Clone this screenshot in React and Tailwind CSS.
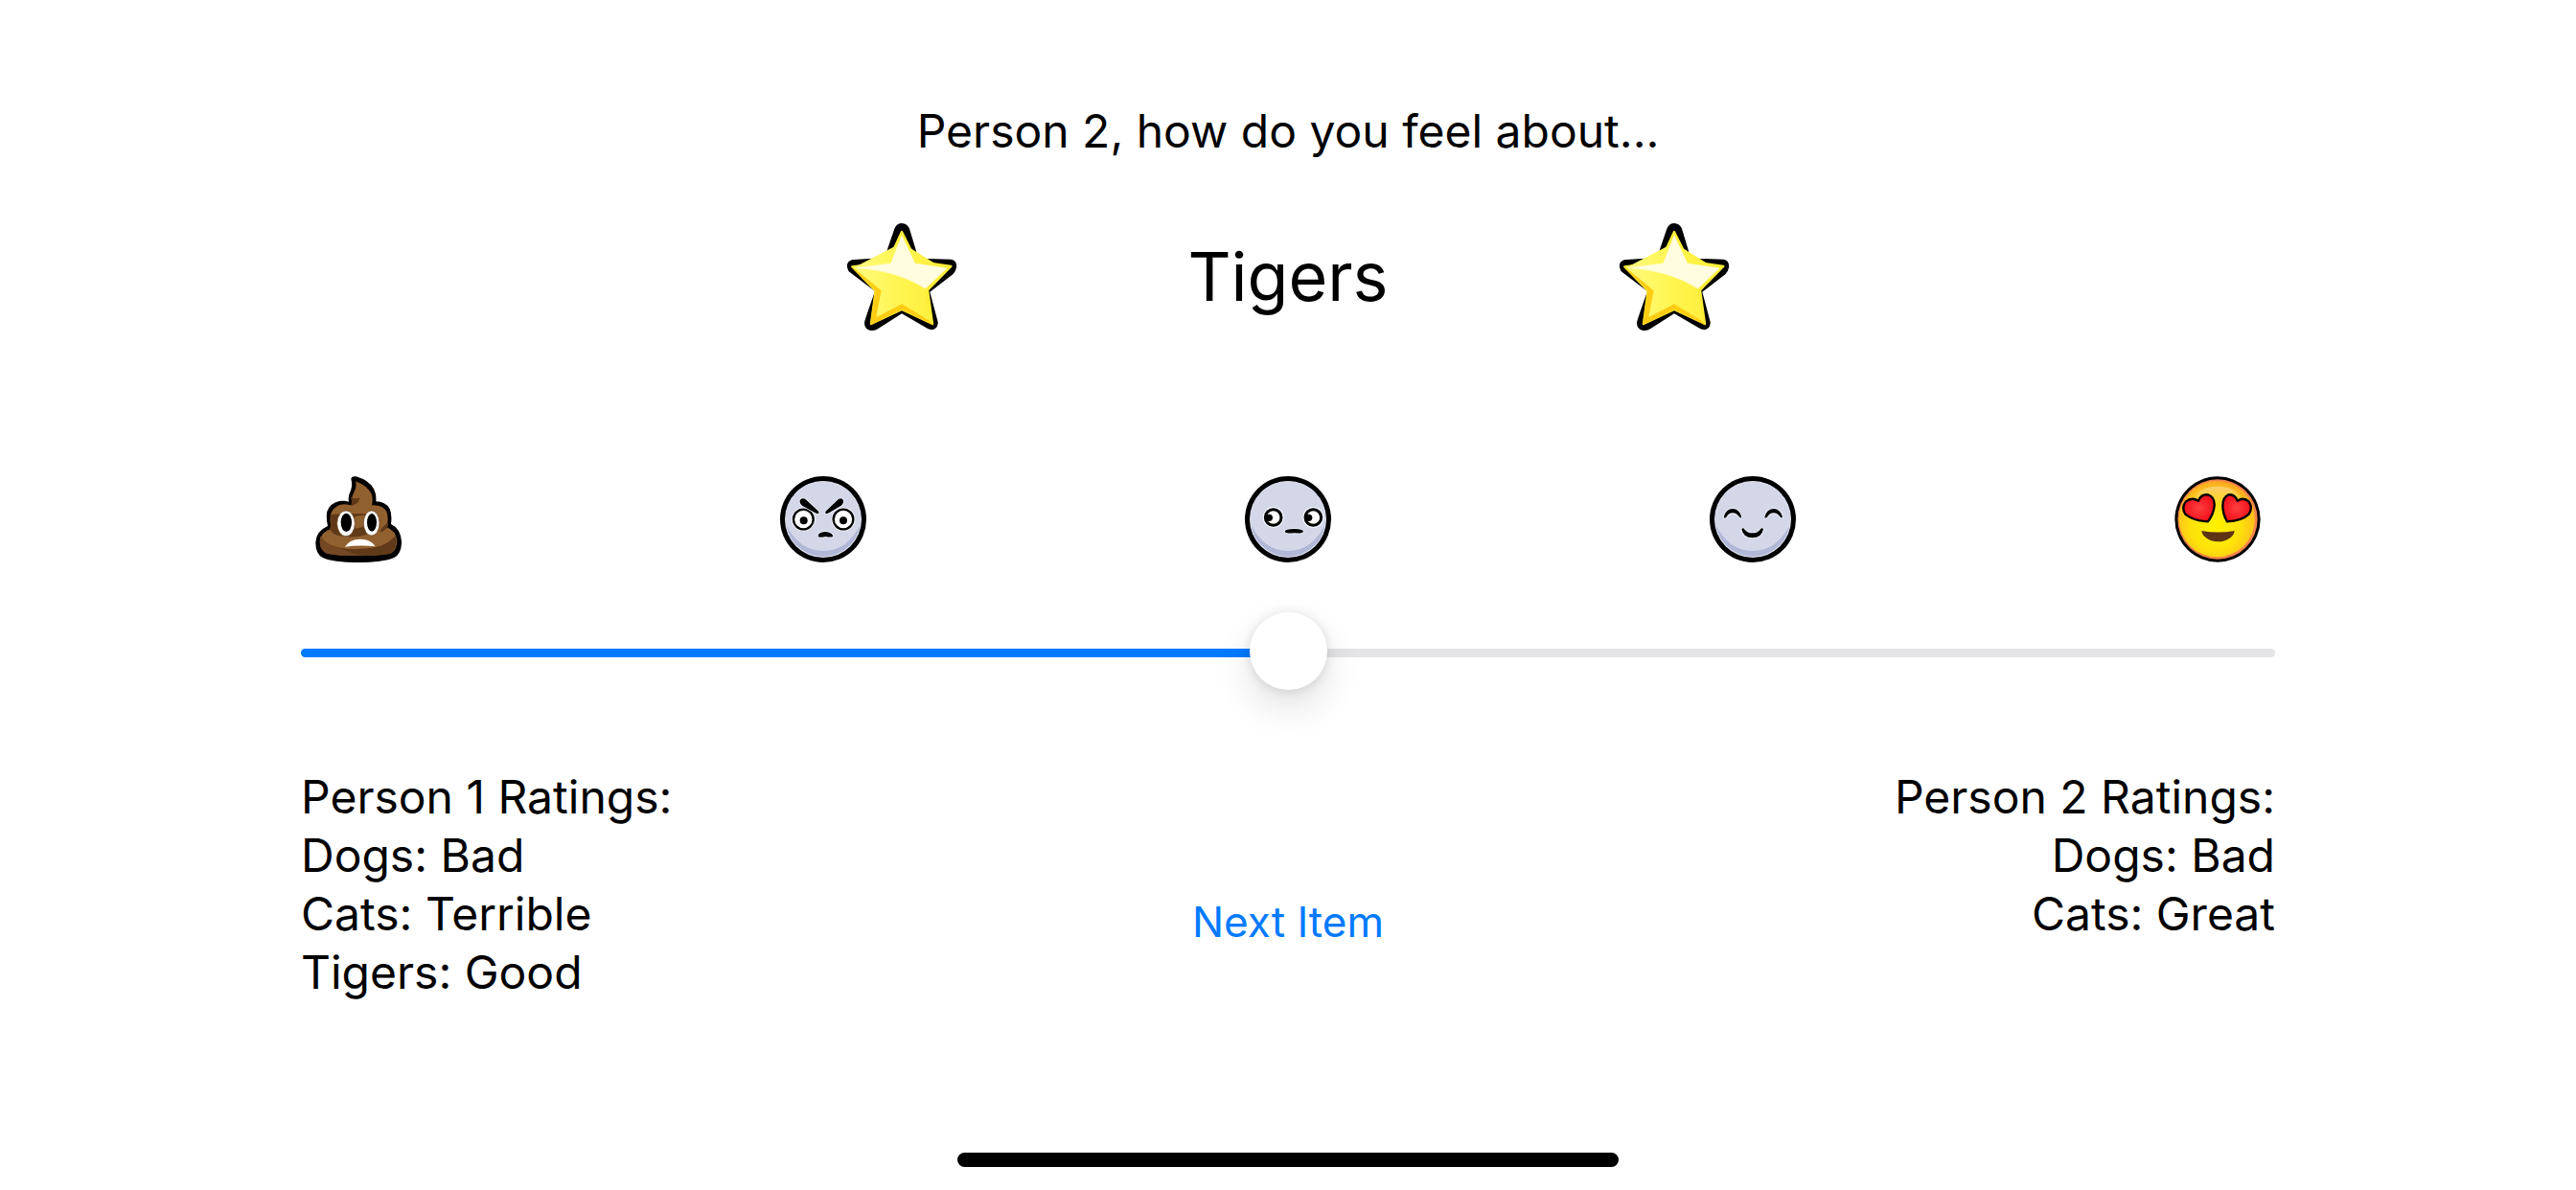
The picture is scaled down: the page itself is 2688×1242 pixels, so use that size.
import { useState } from "react";

function Star() {
  return (
    <svg viewBox="42 36 348 342" className="h-[114px] w-[116px]" role="img" aria-label="Star">
      <defs>
        <linearGradient id="starFill" x1="0" y1="0" x2="1" y2="0">
          <stop offset="0" stopColor="#fffb80" />
          <stop offset="0.5" stopColor="#fff550" />
          <stop offset="1" stopColor="#ffee38" />
        </linearGradient>
      </defs>
      <path d="M193 56Q200 39 216 39Q233 40 240 56L268 149L370 152Q390 156 387 178Q385 190 376 199L304 254L329 348Q330 366 316 371Q303 374 292 366L216 322L142 369Q130 377 116 374Q99 369 99 350Q100 342 132 252L50 190Q42 176 46 165Q51 154 66 153L162 147Z" fill="#000" />
      <path d="M216 66L262 158L370 174L297 248L312 354L216 309L120 354L134 250L61 175L172 161Z" fill="#ffee38" stroke="#ffee38" strokeWidth="7" strokeLinejoin="round" />
      <path d="M58 175L134 250L118 357L216 309L314 357L297 342L216 292L136 333L152 250Z" fill="#ffcd14" stroke="#ffcd14" strokeWidth="2" strokeLinejoin="round" />
      <path d="M66 178L152 250L136 333L216 292L304 344L288 246L350 184L216 100Z" fill="url(#starFill)" />
      <path d="M216 78L182 165L76 179Q200 186 290 243L357 180L257 165Z" fill="#fffce0" stroke="#fffce0" strokeWidth="2" strokeLinejoin="round" />
    </svg>
  );
}

function Face({ label, children }) {
  return (
    <svg viewBox="29 20 270 270" className="size-[90px]" role="img" aria-label={label}>
      {children}
    </svg>
  );
}

function GreyHead() {
  return (
    <>
      <circle cx="164" cy="155" r="135" fill="#000" />
      <circle cx="164" cy="155" r="120" fill="#e6e9f5" />
      <circle cx="164" cy="155" r="117" fill="#b1b7d6" />
      <path d="M47 170A118 118 0 1 1 281 170Q240 254 164 254Q88 254 47 170Z" fill="#d3d7e8" />
    </>
  );
}

function Terrible() {
  return (
    <Face label="Terrible">
      <path d="M141 28Q143 19 157 21Q200 34 213 62Q221 78 219 99Q248 99 262 122Q270 140 266 170Q296 184 299 224Q300 262 276 275Q240 290 164 290Q84 290 52 275Q29 262 30 226Q32 192 68 176Q62 150 66 130Q76 104 104 98Q124 96 134 100Q130 84 140 64Q146 48 141 28Z" fill="#000" />
      <path d="M155 36Q196 52 206 78Q210 94 206 111Q238 108 252 130Q260 152 252 180Q282 190 285 224Q284 252 264 262Q220 270 164 269Q104 270 66 262Q44 252 43 226Q46 194 80 184Q72 158 78 136Q90 110 118 108Q140 110 146 112Q138 92 150 70Q160 52 155 36Z" fill="#91602f" />
      <path d="M139 85Q160 94 168 86Q166 110 140 112Q146 98 139 85ZM76 140Q130 136 206 138Q160 146 154 146Q146 160 154 184Q160 184 182 176Q182 190 192 202Q150 216 104 206Q84 204 74 186Q80 168 76 140ZM255 166Q260 170 254 182Q246 192 230 196Q236 180 255 166ZM44 206Q60 236 106 244Q170 256 234 238Q264 226 280 206Q290 244 264 262Q220 270 164 269Q104 270 66 262Q42 250 44 206Z" fill="#603a18" />
      <path d="M44 210Q66 238 112 247Q140 262 180 269L120 268Q82 266 60 260Q40 246 44 210Z" fill="#744823" />
      <ellipse cx="125" cy="168" rx="28" ry="40" fill="#fff" stroke="#603a18" strokeWidth="2" />
      <ellipse cx="205" cy="167" rx="25" ry="39" fill="#fff" stroke="#603a18" strokeWidth="2" />
      <ellipse cx="126" cy="165" rx="17" ry="29" fill="#000" />
      <ellipse cx="206" cy="165" rx="15" ry="28" fill="#000" />
      <path d="M122 241Q136 217 170 217Q204 217 217 240Q170 234 122 241Z" fill="#fff" />
    </Face>
  );
}

function Bad() {
  return (
    <Face label="Bad">
      <GreyHead />
      <g fill="none" stroke="#fff" strokeWidth="3">
        <circle cx="102" cy="155" r="36" />
        <circle cx="227" cy="155" r="36" />
      </g>
      <circle cx="102" cy="155" r="31" fill="#fff" stroke="#000" strokeWidth="7" />
      <circle cx="227" cy="155" r="31" fill="#fff" stroke="#000" strokeWidth="7" />
      <circle cx="103" cy="159" r="12" />
      <circle cx="227" cy="159" r="12" />
      <path d="M91 102Q89 93 98 90Q106 88 114 97L148 129Q153 136 147 138L139 135L98 112Q92 108 91 102ZM227 102Q229 93 220 90Q212 90 206 97L173 129Q168 136 174 138L182 135L220 112Q226 108 227 102Z" stroke="#f4f6ff" strokeWidth="4" paintOrder="stroke" />
      <path d="M148 210Q147 195 170 194Q193 195 195 209Q184 212 172 209Q158 213 148 210Z" stroke="#f4f6ff" strokeWidth="4" paintOrder="stroke" />
    </Face>
  );
}

function Okay() {
  return (
    <Face label="Okay">
      <GreyHead />
      <g fill="none" stroke="#f4f6ff" strokeWidth="4">
        <circle cx="118" cy="149" r="31" />
        <circle cx="243" cy="149" r="31" />
      </g>
      <circle cx="118" cy="149" r="25" fill="#fff" stroke="#000" strokeWidth="9" />
      <circle cx="243" cy="149" r="25" fill="#fff" stroke="#000" strokeWidth="9" />
      <circle cx="105" cy="150" r="11" />
      <circle cx="229" cy="150" r="11" />
      <path d="M154 193Q155 185 184 185Q211 185 212 193Q211 200 184 198Q155 200 154 193Z" stroke="#f4f6ff" strokeWidth="5" paintOrder="stroke" />
    </Face>
  );
}

function Good() {
  return (
    <Face label="Good">
      <GreyHead />
      <g stroke="#f4f6ff" strokeWidth="5" paintOrder="stroke">
        <path d="M73 148Q80 122 101 122Q122 122 129 148Q126 153 121 147Q113 135 101 135Q89 135 81 148Q75 153 73 148Z" />
        <path d="M201 148Q208 122 229 122Q250 122 257 148Q254 153 249 147Q241 135 229 135Q217 135 209 148Q203 153 201 148Z" />
        <path d="M129 186Q133 179 139 187Q147 198 163 198Q179 198 187 187Q193 179 197 186Q192 213 163 213Q134 213 129 186Z" />
      </g>
    </Face>
  );
}

function Great() {
  return (
    <Face label="Great">
      <defs>
        <radialGradient id="loveSkin" cx="0.48" cy="0.6" r="0.62">
          <stop offset="0" stopColor="#fff200" />
          <stop offset="0.5" stopColor="#fde30a" />
          <stop offset="0.8" stopColor="#fcc41a" />
          <stop offset="1" stopColor="#f9a024" />
        </radialGradient>
        <linearGradient id="loveShine" x1="0" y1="0" x2="0" y2="1">
          <stop offset="0" stopColor="#fdcf70" />
          <stop offset="1" stopColor="#fbd51c" stopOpacity="0" />
        </linearGradient>
        <radialGradient id="loveHeart">
          <stop offset="0" stopColor="#ff4040" />
          <stop offset="1" stopColor="#f0101c" />
        </radialGradient>
      </defs>
      <circle cx="164" cy="155" r="134" fill="#000" />
      <circle cx="164" cy="155" r="125" fill="#f4844a" />
      <circle cx="162" cy="154" r="119" fill="url(#loveSkin)" />
      <ellipse cx="164" cy="96" rx="74" ry="44" fill="url(#loveShine)" />
      <path d="M134 162Q88 160 63 139Q50 119 64 100Q82 84 104 97Q112 76 134 78Q156 86 154 112Q152 138 134 162Z" fill="url(#loveHeart)" stroke="#000" strokeWidth="7" strokeLinejoin="round" />
      <path d="M194 162Q240 160 262 139Q275 119 262 100Q246 84 226 97Q218 76 198 78Q180 86 180 112Q180 138 194 162Z" fill="url(#loveHeart)" stroke="#000" strokeWidth="7" strokeLinejoin="round" />
      <path d="M114 191Q166 200 217 191Q216 205 202 214Q186 225 165 225Q142 225 128 213Q115 204 114 191Z" fill="#5e3415" />
    </Face>
  );
}

const faces = [Terrible, Bad, Okay, Good, Great];

function Ratings({ title, items, className }) {
  return (
    <section className={className}>
      <h2>{title}</h2>
      <ul>
        {items.map((item) => (
          <li key={item}>{item}</li>
        ))}
      </ul>
    </section>
  );
}

export default function App() {
  const [value, setValue] = useState(50);
  return (
    <div className="flex min-h-screen flex-col bg-white font-['Inter','Liberation_Sans',sans-serif] text-[48px] leading-[61px] text-black">
      <main className="flex flex-col px-[314px] pt-[106px]">
        <p className="text-center">Person 2, how do you feel about...</p>

        <div className="mx-auto mt-[65px] grid w-full max-w-[1208px] grid-cols-3 place-items-center">
          <Star />
          <h1 className="text-[70px] leading-[88px]">Tigers</h1>
          <Star />
        </div>

        <div className="mt-[151px] flex justify-between">
          {faces.map((FaceIcon, i) => (
            <div key={i} className="flex w-[120px] justify-center">
              <FaceIcon />
            </div>
          ))}
        </div>

        <input
          type="range"
          min="0"
          max="100"
          aria-label="Rating"
          value={value}
          onChange={(e) => setValue(Number(e.target.value))}
          style={{ "--fill": `${value}%` }}
          className="mt-[52px] h-[85px] w-full cursor-pointer appearance-none bg-transparent [&::-webkit-slider-runnable-track]:h-[9px] [&::-webkit-slider-runnable-track]:rounded-full [&::-webkit-slider-runnable-track]:bg-[linear-gradient(to_right,#007aff_var(--fill),#e4e4e6_var(--fill))] [&::-webkit-slider-thumb]:-mt-[38px] [&::-webkit-slider-thumb]:size-[81px] [&::-webkit-slider-thumb]:appearance-none [&::-webkit-slider-thumb]:rounded-full [&::-webkit-slider-thumb]:bg-white [&::-webkit-slider-thumb]:shadow-[0_18px_39px_rgba(0,0,0,0.12),0_1px_12px_rgba(0,0,0,0.12)]"
        />

        <div className="mt-[77px] grid grid-cols-3 items-start">
          <Ratings title="Person 1 Ratings:" items={["Dogs: Bad", "Cats: Terrible", "Tigers: Good"]} />
          <button type="button" className="mt-[134px] cursor-pointer justify-self-center text-[44px] leading-[54px] text-[#007aff]">
            Next Item
          </button>
          <Ratings title="Person 2 Ratings:" items={["Dogs: Bad", "Cats: Great"]} className="text-right" />
        </div>
      </main>

      <div className="mx-auto mt-auto mb-6 h-[15px] w-[690px] max-w-full rounded-full bg-black" />
    </div>
  );
}
